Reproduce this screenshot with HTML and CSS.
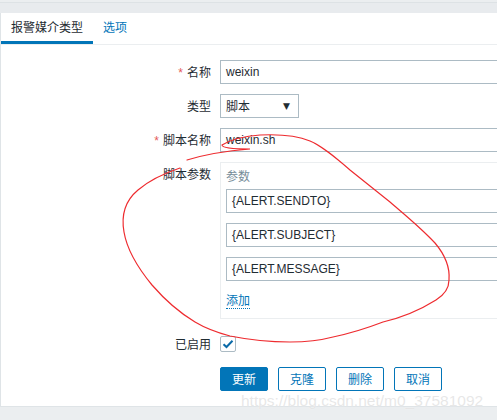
FILE: index.html
```html
<!DOCTYPE html>
<html lang="zh">
<head>
<meta charset="utf-8">
<link rel="stylesheet" href="styles.css">
</head>
<body>
<div class="topbar"></div>
<div class="panel">
  <div class="tabs">
    <div class="tab active">报警媒介类型</div>
    <div class="tab">选项</div>
  </div>
  <div class="form">
    <div class="row">
      <div class="label"><span class="req">*</span>名称</div>
      <div class="field"><div class="input">weixin</div></div>
    </div>
    <div class="row">
      <div class="label">类型</div>
      <div class="field"><div class="select">脚本<span class="arrow">▼</span></div></div>
    </div>
    <div class="row">
      <div class="label"><span class="req">*</span>脚本名称</div>
      <div class="field"><div class="input">weixin.sh</div></div>
    </div>
    <div class="row">
      <div class="label">脚本参数</div>
      <div class="field">
        <div class="params">
          <div class="params-head">参数</div>
          <div class="input">{ALERT.SENDTO}</div>
          <div class="input">{ALERT.SUBJECT}</div>
          <div class="input">{ALERT.MESSAGE}</div>
          <div class="add"><span class="link">添加</span></div>
        </div>
      </div>
    </div>
    <div class="row check-row">
      <div class="label">已启用</div>
      <div class="field">
        <div class="checkbox">
          <svg width="12" height="10" viewBox="0 0 12 10"><path d="M1.5 5.2 L4.5 8 L10.5 1.8" fill="none" stroke="#0b6aa8" stroke-width="2"/></svg>
        </div>
      </div>
    </div>
    <div class="row buttons">
      <div class="label"></div>
      <div class="field btns">
        <div class="btn primary">更新</div>
        <div class="btn">克隆</div>
        <div class="btn">删除</div>
        <div class="btn">取消</div>
      </div>
    </div>
  </div>
</div>
<div class="bottombar"></div>
<div class="watermark">https://blog.csdn.net/m0_37581092</div>
<svg class="scribble" width="497" height="420" viewBox="0 0 497 420">
  <path d="M187 160 C200 156 225 151 250 149 C232 149 222 148 222 145 C232 139 245 136 260 135 C280 134 298 136 310 141 C322 146 335 157 350 170 C365 182 375 190 390 202 C405 215 420 227 435 243 C446 256 450 268 449 280 C449 289 444 295 436 300 C420 310 400 318 383 322 C370 327 352 333 333 337 C318 341 305 342 290 342 C270 342 250 340 230 336 C215 332 205 328 195 322 C180 313 165 300 152 285 C138 268 127 250 124 232 C121 215 126 200 138 190 C152 178 168 172 180 168" fill="none" stroke="#ee2b2f" stroke-width="1.2" stroke-linecap="round"/>
</svg>
</body>
</html>
```
FILE: styles.css
```css
html, body {
  margin: 0;
  padding: 0;
}
body {
  width: 497px;
  height: 420px;
  overflow: hidden;
  background: #ebeef0;
  font-family: "Liberation Sans", Arial, "Noto Sans CJK SC", sans-serif;
  font-size: 12px;
  color: #1f2c33;
  position: relative;
}
.topbar {
  height: 13px;
  box-sizing: border-box;
  border-top: 2px solid #ebeef0;
  background: #e8ebee;
  box-shadow: inset 0 1px 0 #dde2e5;
}
.panel {
  height: 393px;
  background: #fff;
  border-left: 1px solid #dfe4e7;
  box-sizing: border-box;
  overflow: hidden;
}
.bottombar {
  height: 14px;
  background: #ebeef0;
  border-top: 1px solid #dfe4e7;
  box-sizing: border-box;
}
.tabs {
  display: flex;
  height: 32px;
  border-bottom: 1px solid #ebeef0;
  box-sizing: border-box;
}
.tab {
  padding: 0 10px;
  height: 31px;
  box-sizing: border-box;
  line-height: 28px;
  font-size: 12px;
  font-family: "Noto Sans CJK SC", sans-serif;
  color: #0275b8;
  border-bottom: 3px solid transparent;
}
.tab.active {
  color: #1f2c33;
  border-bottom-color: #0275b8;
}
.form {
  padding-top: 15px;
  display: flex;
  flex-direction: column;
  gap: 10px;
}
.row {
  display: grid;
  grid-template-columns: 210px 1fr;
  column-gap: 9px;
  align-items: start;
  height: 24px;
}
.label {
  text-align: right;
  height: 24px;
  line-height: 24px;
  font-family: "Noto Sans CJK SC", sans-serif;
  font-size: 12px;
  color: #1f2c33;
}
.req {
  color: #e45959;
  margin-right: 4px;
  font-family: "Liberation Sans", sans-serif;
}
.field {
  min-width: 0;
}
.input {
  height: 24px;
  box-sizing: border-box;
  border: 1px solid #acbbc4;
  border-right: none;
  padding: 0 5px;
  line-height: 22px;
  font-size: 12px;
  color: #1f2c33;
  background: #fff;
}
.select {
  width: 79px;
  height: 24px;
  box-sizing: border-box;
  border: 1px solid #acbbc4;
  padding: 0 5px;
  line-height: 22px;
  font-family: "Noto Sans CJK SC", sans-serif;
  display: flex;
  justify-content: space-between;
}
.arrow {
  font-size: 9px;
  font-family: "DejaVu Sans", sans-serif;
  color: #1f2c33;
  padding-right: 3px;
}
.row:has(.params) {
  height: 157px;
}
.params {
  border: 1px solid #ebeef0;
  border-right: none;
  box-sizing: border-box;
  height: 157px;
  padding: 5px 0 0 5px;
  display: flex;
  flex-direction: column;
  gap: 10px;
}
.params-head {
  font-family: "Noto Sans CJK SC", sans-serif;
  color: #768d99;
  height: 16px;
  line-height: 16px;
  margin-bottom: -5px;
}
.add {
  height: 16px;
  line-height: 16px;
  font-family: "Noto Sans CJK SC", sans-serif;
  margin-top: 1px;
}
.link {
  color: #0275b8;
  border-bottom: 1px dotted #0275b8;
}
.check-row {
  margin-top: 3px;
  align-items: center;
}
.checkbox {
  width: 16px;
  height: 16px;
  box-sizing: border-box;
  border: 1px solid #acbbc4;
  border-radius: 2px;
  display: flex;
  align-items: center;
  justify-content: center;
}
.buttons {
  margin-top: 1px;
}
.btns {
  display: flex;
  gap: 10px;
}
.btn {
  width: 48px;
  height: 24px;
  box-sizing: border-box;
  border: 1px solid #0275b8;
  border-radius: 2px;
  color: #0275b8;
  background: #fff;
  text-align: center;
  line-height: 22px;
  font-family: "Noto Sans CJK SC", sans-serif;
  font-size: 12px;
}
.btn.primary {
  background: #0275b8;
  color: #fff;
}
.watermark {
  position: absolute;
  left: 241px;
  top: 392px;
  font-family: "Liberation Sans", Arial, sans-serif;
  font-size: 15.5px;
  color: rgba(215, 215, 215, 0.6);
  text-shadow: 0 0 1px #fff;
  white-space: nowrap;
}
.scribble {
  position: absolute;
  left: 0;
  top: 0;
  pointer-events: none;
}
```
